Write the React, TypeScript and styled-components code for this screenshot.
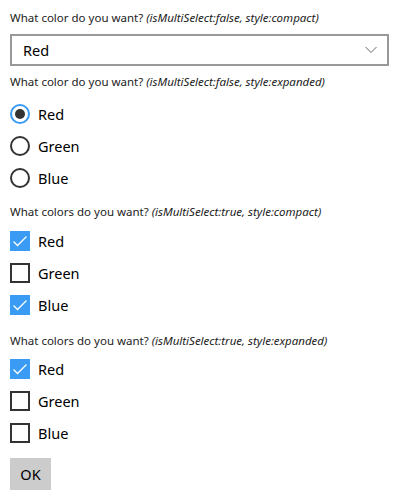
import React from "react";
import styled, { createGlobalStyle } from "styled-components";

const Global = createGlobalStyle`
  html, body { margin: 0; padding: 0; background: #fff; }
  body { font-family: "Noto Sans", "Open Sans", sans-serif; color: #000; }
`;

const Page = styled.div`
  padding: 10px;
  display: flex;
  flex-direction: column;
`;

const Label = styled.div<{ $top: number }>`
  margin-top: ${(p) => p.$top}px;
  font-size: 11.5px;
  line-height: 16px;
  height: 16px;
  color: #222;
  white-space: nowrap;
  em { font-style: italic; color: #222; }
`;

const Select = styled.div`
  margin-top: 8px;
  height: 32px;
  box-sizing: border-box;
  border: 2px solid #999;
  display: flex;
  align-items: center;
  justify-content: space-between;
  padding: 0 10px 0 11px;
  font-size: 14.5px;
  width: 379px;
`;

const Rows = styled.div<{ $top: number }>`
  margin-top: ${(p) => p.$top}px;
  display: flex;
  flex-direction: column;
`;

const Row = styled.div`
  height: 32px;
  display: flex;
  align-items: center;
  gap: 8px;
  font-size: 14.5px;
`;

const Radio = styled.span<{ $on?: boolean }>`
  width: 20px;
  height: 20px;
  box-sizing: border-box;
  border-radius: 50%;
  border: 2px solid ${(p) => (p.$on ? "#3a9bf4" : "#333")};
  display: flex;
  align-items: center;
  justify-content: center;
  &::after {
    content: "";
    width: 10px;
    height: 10px;
    border-radius: 50%;
    background: ${(p) => (p.$on ? "#333" : "transparent")};
  }
`;

const Check = styled.span<{ $on?: boolean }>`
  width: 20px;
  height: 20px;
  box-sizing: border-box;
  border: ${(p) => (p.$on ? "none" : "2px solid #333")};
  background: ${(p) => (p.$on ? "#3a9bf4" : "transparent")};
  display: flex;
  align-items: center;
  justify-content: center;
`;

const Button = styled.button`
  margin-top: 9px;
  align-self: flex-start;
  width: 41px;
  height: 32px;
  border: none;
  background: #ccc;
  font-family: inherit;
  font-size: 14.5px;
  color: #000;
  padding: 0;
`;

const Tick = () => (
  <svg width="20" height="20" viewBox="0 0 20 20">
    <path d="M3.5 10.5 L7.5 14.5 L16.5 5.5" fill="none" stroke="#fff" strokeWidth="1.3" />
  </svg>
);

const Chevron = () => (
  <svg width="12" height="8" viewBox="0 0 12 8">
    <path d="M0.5 1 L6 6.5 L11.5 1" fill="none" stroke="#666" strokeWidth="1" />
  </svg>
);

const CheckRow = ({ on, label }: { on?: boolean; label: string }) => (
  <Row>
    <Check $on={on}>{on && <Tick />}</Check>
    {label}
  </Row>
);

export default function App() {
  return (
    <>
      <Global />
      <Page>
        <Label $top={0}>
          What color do you want? <em>(isMultiSelect:false, style:compact)</em>
        </Label>
        <Select>
          <span>Red</span>
          <Chevron />
        </Select>
        <Label $top={8}>
          What color do you want? <em>(isMultiSelect:false, style:expanded)</em>
        </Label>
        <Rows $top={8}>
          <Row><Radio $on />Red</Row>
          <Row><Radio />Green</Row>
          <Row><Radio />Blue</Row>
        </Rows>
        <Label $top={10}>
          What colors do you want? <em>(isMultiSelect:true, style:compact)</em>
        </Label>
        <Rows $top={5}>
          <CheckRow on label="Red" />
          <CheckRow label="Green" />
          <CheckRow on label="Blue" />
        </Rows>
        <Label $top={12}>
          What colors do you want? <em>(isMultiSelect:true, style:expanded)</em>
        </Label>
        <Rows $top={4}>
          <CheckRow on label="Red" />
          <CheckRow label="Green" />
          <CheckRow label="Blue" />
        </Rows>
        <Button>OK</Button>
      </Page>
    </>
  );
}
